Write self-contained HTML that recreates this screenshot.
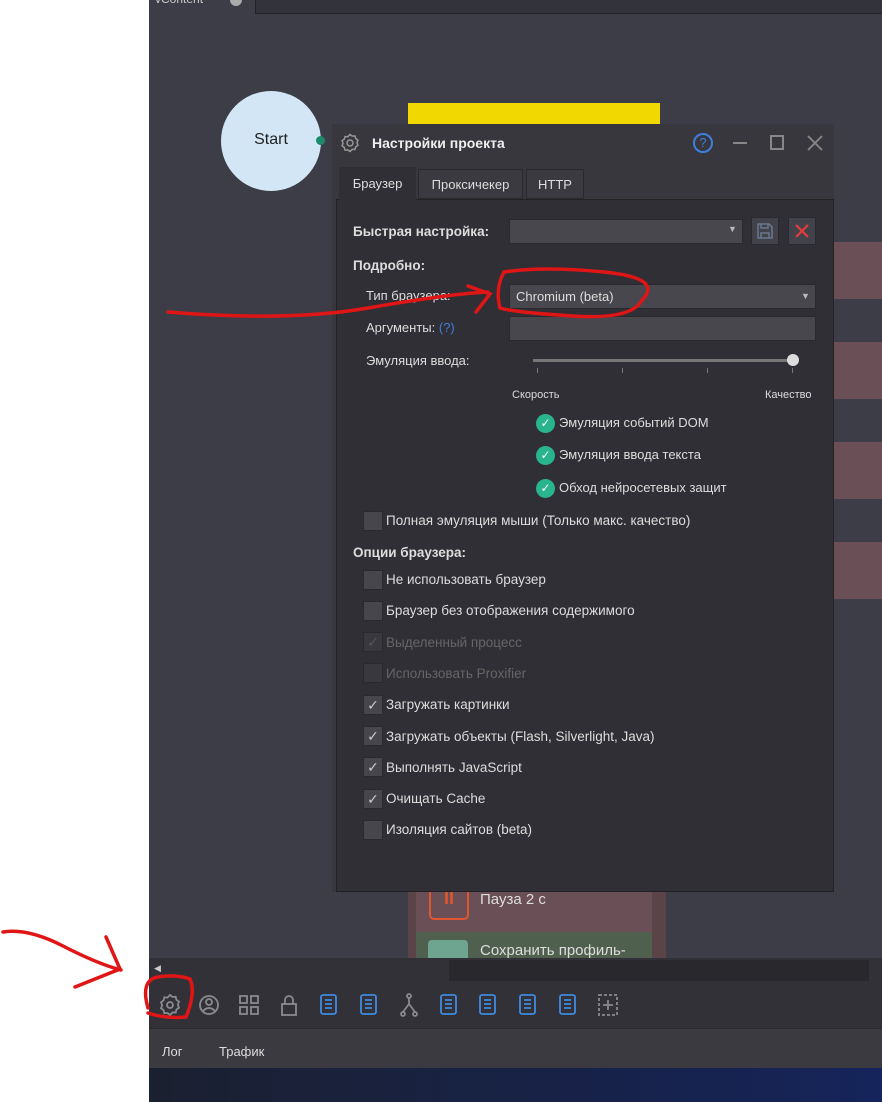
<!DOCTYPE html><html><head><meta charset="utf-8"><style>
*{box-sizing:border-box;margin:0;padding:0}
body{width:882px;height:1102px;position:relative;overflow:hidden;background:#fff;font-family:"Liberation Sans","DejaVu Sans",sans-serif;font-size:13px;color:#ddd}
.a{position:absolute}
.cb{position:absolute;width:20px;height:20px;background:#46464c;border:1px solid #2a2a2e;left:363px;color:#ccc;font-size:14px;text-align:center;line-height:18px}
.lbl{position:absolute;left:386px;font-size:13.5px;color:#ddd}
.dis{color:#666}
.ok{position:absolute;left:536px;width:19px;height:19px;border-radius:50%;background:#28b48c;color:#fff;font-size:12px;text-align:center;line-height:19px;font-weight:bold}
.inp{position:absolute;background:#47474d;border:1px solid #2a2a2e}
</style></head><body>
<div class="a" style="left:149px;top:0;width:733px;height:958px;background:#3c3d47"></div>
<div class="a" style="left:155px;top:-8px;color:#ccc;font-size:12px">vContent</div>
<div class="a" style="left:230px;top:-6px;width:12px;height:12px;border-radius:50%;background:#aaa"></div>
<div class="a" style="left:255px;top:0;width:627px;height:14px;background:#32333b;border-left:1px solid #222;border-bottom:1px solid #222"></div>
<div class="a" style="left:221px;top:91px;width:100px;height:100px;border-radius:50%;background:#d3e6f6;color:#222;font-size:16px;text-align:center;line-height:98px">Start</div>
<div class="a" style="left:316px;top:136px;width:9px;height:9px;border-radius:50%;background:#1d8a6a"></div>
<div class="a" style="left:408px;top:103px;width:252px;height:22px;background:#f0d800"></div>
<div class="a" style="left:834px;top:242px;width:48px;height:57px;background:#6a5056"></div>
<div class="a" style="left:834px;top:342px;width:48px;height:57px;background:#6a5056"></div>
<div class="a" style="left:834px;top:442px;width:48px;height:57px;background:#6a5056"></div>
<div class="a" style="left:834px;top:542px;width:48px;height:57px;background:#6a5056"></div>
<div class="a" style="left:408px;top:880px;width:258px;height:78px;background:#5a4448"></div>
<div class="a" style="left:416px;top:880px;width:236px;height:52px;background:#6a5056"></div>
<div class="a" style="left:429px;top:880px;width:40px;height:40px;border:2px solid #e0562e;border-top:none;border-radius:0 0 5px 5px;color:#e0562e;font-size:18px;text-align:center;line-height:36px;font-weight:bold">II</div>
<div class="a" style="left:480px;top:891px;font-size:15px;color:#ddd">Пауза 2 с</div>
<div class="a" style="left:416px;top:932px;width:236px;height:26px;background:#50604f"></div>
<div class="a" style="left:428px;top:940px;width:40px;height:18px;background:#6ea590;border-radius:4px 4px 0 0"></div>
<div class="a" style="left:480px;top:942px;font-size:15px;color:#ddd">Сохранить профиль-</div>

<!-- dialog -->
<div class="a" style="left:332px;top:124px;width:502px;height:768px;background:#37373d"></div>
<svg class="a" style="left:340px;top:133px" width="20" height="20" viewBox="0 0 20 20" fill="none" stroke="#999" stroke-width="1.5"><path d="M10 1.5l2.2 1.6 2.7-.2.8 2.6 2.2 1.6-.9 2.6.9 2.6-2.2 1.6-.8 2.6-2.7-.2L10 18.5l-2.2-1.6-2.7.2-.8-2.6-2.2-1.6.9-2.6-.9-2.6 2.2-1.6.8-2.6 2.7.2z"/><circle cx="10" cy="10" r="3"/></svg>
<div class="a" style="left:372px;top:135px;font-size:14px;font-weight:bold;color:#eee">Настройки проекта</div>
<div class="a" style="left:693px;top:133px;width:20px;height:20px;border:2px solid #3f7fe0;border-radius:50%;color:#3f7fe0;text-align:center;line-height:16px;font-size:13px">?</div>
<div class="a" style="left:733px;top:142px;width:14px;height:2px;background:#888"></div>
<div class="a" style="left:770px;top:135px;width:14px;height:15px;border:2px solid #888"></div>
<svg class="a" style="left:807px;top:135px" width="16" height="16" stroke="#888" stroke-width="1.8"><path d="M1 1L15 15M15 1L1 15"/></svg>
<div class="a" style="left:336px;top:199px;width:498px;height:693px;background:#2f2f35;border:1px solid #222"></div>
<div class="a" style="left:339px;top:167px;width:77px;height:33px;background:#2f2f35;color:#ddd;text-align:center;line-height:34px">Браузер</div>
<div class="a" style="left:418px;top:169px;width:105px;height:30px;background:#3a3a40;border:1px solid #2a2a2e;color:#ddd;text-align:center;line-height:30px">Проксичекер</div>
<div class="a" style="left:526px;top:169px;width:58px;height:30px;background:#3a3a40;border:1px solid #2a2a2e;color:#ddd;text-align:center;line-height:30px">HTTP</div>
<div class="a" style="left:353px;top:224px;font-weight:bold;font-size:13.5px">Быстрая настройка:</div>
<div class="inp" style="left:509px;top:219px;width:234px;height:25px"></div>
<div class="a" style="left:728px;top:224px;color:#bbb;font-size:9px">▼</div>
<div class="inp" style="left:751px;top:217px;width:28px;height:28px;background:#42424a"></div>
<svg class="a" style="left:757px;top:223px" width="16" height="16" fill="none" stroke="#6b7890" stroke-width="1.5"><path d="M1 1h11l3 3v11H1z M4 1v4h7V1 M4 15v-5h8v5"/></svg>
<div class="inp" style="left:788px;top:217px;width:28px;height:28px;background:#42424a"></div>
<svg class="a" style="left:794px;top:223px" width="16" height="16" stroke="#e43b3b" stroke-width="2.2"><path d="M2 2L14 14M14 2L2 14"/></svg>
<div class="a" style="left:353px;top:258px;font-weight:bold;font-size:13.5px">Подробно:</div>
<div class="a" style="left:366px;top:288px">Тип браузера:</div>
<div class="inp" style="left:509px;top:284px;width:307px;height:25px;color:#ddd;padding-left:6px;line-height:23px">Chromium (beta)</div>
<div class="a" style="left:801px;top:291px;color:#bbb;font-size:9px">▼</div>
<div class="a" style="left:366px;top:320px">Аргументы: <span style="color:#3f7fe0">(?)</span></div>
<div class="inp" style="left:509px;top:316px;width:307px;height:25px"></div>
<div class="a" style="left:366px;top:353px">Эмуляция ввода:</div>
<div class="a" style="left:533px;top:359px;width:262px;height:3px;background:#777"></div>
<div class="a" style="left:787px;top:354px;width:12px;height:12px;border-radius:50%;background:#ddd"></div>
<div class="a" style="left:537px;top:368px;width:1px;height:5px;background:#777"></div>
<div class="a" style="left:622px;top:368px;width:1px;height:5px;background:#777"></div>
<div class="a" style="left:707px;top:368px;width:1px;height:5px;background:#777"></div>
<div class="a" style="left:792px;top:368px;width:1px;height:5px;background:#777"></div>
<div class="a" style="left:512px;top:389px;font-size:11px">Скорость</div>
<div class="a" style="left:765px;top:389px;font-size:11px">Качество</div>
<div class="ok" style="top:414px">✓</div><div class="a" style="left:559px;top:415px">Эмуляция событий DOM</div>
<div class="ok" style="top:446px">✓</div><div class="a" style="left:559px;top:447px">Эмуляция ввода текста</div>
<div class="ok" style="top:479px">✓</div><div class="a" style="left:559px;top:480px">Обход нейросетевых защит</div>
<div class="cb" style="top:511px"></div><div class="lbl" style="top:513px">Полная эмуляция мыши (Только макс. качество)</div>
<div class="a" style="left:353px;top:545px;font-weight:bold;font-size:13.5px">Опции браузера:</div>
<div class="cb" style="top:570px"></div><div class="lbl" style="top:572px">Не использовать браузер</div>
<div class="cb" style="top:601px"></div><div class="lbl" style="top:603px">Браузер без отображения содержимого</div>
<div class="cb" style="top:632px;background:#38383e;color:#555">✓</div><div class="lbl dis" style="top:635px">Выделенный процесс</div>
<div class="cb" style="top:663px;background:#38383e"></div><div class="lbl dis" style="top:666px">Использовать Proxifier</div>
<div class="cb" style="top:695px">✓</div><div class="lbl" style="top:697px">Загружать картинки</div>
<div class="cb" style="top:726px">✓</div><div class="lbl" style="top:729px">Загружать объекты (Flash, Silverlight, Java)</div>
<div class="cb" style="top:757px">✓</div><div class="lbl" style="top:760px">Выполнять JavaScript</div>
<div class="cb" style="top:789px">✓</div><div class="lbl" style="top:791px">Очищать Cache</div>
<div class="cb" style="top:820px"></div><div class="lbl" style="top:822px">Изоляция сайтов (beta)</div>

<!-- bottom -->
<div class="a" style="left:149px;top:958px;width:733px;height:70px;background:#313137"></div>
<div class="a" style="left:449px;top:960px;width:420px;height:21px;background:#28282d"></div>
<div class="a" style="left:154px;top:963px;color:#ccc;font-size:9px">◀</div>
<div class="a" style="left:149px;top:1028px;width:733px;height:40px;background:#3a3a40;border-top:1px solid #2a2a2e"></div>
<div class="a" style="left:162px;top:1044px;color:#ddd">Лог</div>
<div class="a" style="left:219px;top:1044px;color:#ddd">Трафик</div>
<div class="a" style="left:149px;top:1068px;width:733px;height:34px;background:linear-gradient(90deg,#1b2030,#15245a)"></div>
<svg class="a" style="left:149px;top:985px" width="480" height="40" viewBox="0 0 480 40" fill="none" stroke="#8a8a90" stroke-width="1.8">
<path d="M21 10l2.5 2 3.2-.3.7 3.1 2.6 1.9-1.2 3 1.2 3-2.6 1.9-.7 3.1-3.2-.3L21 30l-2.5-2-3.2.3-.7-3.1-2.6-1.9 1.2-3-1.2-3 2.6-1.9.7-3.1 3.2.3z"/><circle cx="21" cy="20" r="3"/>
<circle cx="60" cy="20" r="9"/><circle cx="60" cy="17" r="3"/><path d="M54 26q6-6 12 0"/>
<rect x="91" y="11" width="7" height="7"/><rect x="102" y="11" width="7" height="7"/><rect x="91" y="22" width="7" height="7"/><rect x="102" y="22" width="7" height="7"/>
<rect x="133" y="19" width="14" height="11"/><path d="M136 19v-4a4 4 0 0 1 8 0v4"/>
<g stroke="#3f8ae0"><rect x="172" y="10" width="15" height="19" rx="2"/><path d="M176 15h7M176 19h7M176 23h7"/>
<rect x="212" y="10" width="15" height="19" rx="2"/><path d="M216 15h7M216 19h7M216 23h7"/>
<rect x="292" y="10" width="15" height="19" rx="2"/><path d="M296 15h7M296 19h7M296 23h7"/>
<rect x="331" y="10" width="15" height="19" rx="2"/><path d="M335 15h7M335 19h7M335 23h7"/>
<rect x="371" y="10" width="15" height="19" rx="2"/><path d="M375 15h7M375 19h7M375 23h7"/>
<rect x="411" y="10" width="15" height="19" rx="2"/><path d="M415 15h7M415 19h7M415 23h7"/></g>
<circle cx="260" cy="11" r="2"/><circle cx="254" cy="29" r="2"/><circle cx="266" cy="29" r="2"/><path d="M260 13v6l-6 8M260 19l6 8"/>
<rect x="450" y="10" width="18" height="20" stroke-dasharray="3 2"/><path d="M459 15v10M454 20h10"/>
</svg>
<svg class="a" style="left:0;top:0" width="882" height="1102" fill="none" stroke="#e01515" stroke-width="3.5" stroke-linecap="round">
<path d="M168 312q120 10 200-4t120-16"/><path d="M468 286l22 8-14 18"/>
<path d="M504 272q40-6 100 0t38 28q-10 20-70 16t-72-8q-5-20 4-36"/>
<path d="M3 932q25-4 60 14t58 24"/><path d="M106 937l14 32-45 18"/>
<path d="M148 1008q-8-28 10-31t32 2q6 14-4 38-20 2-38-4"/>
</svg>
</body></html>
